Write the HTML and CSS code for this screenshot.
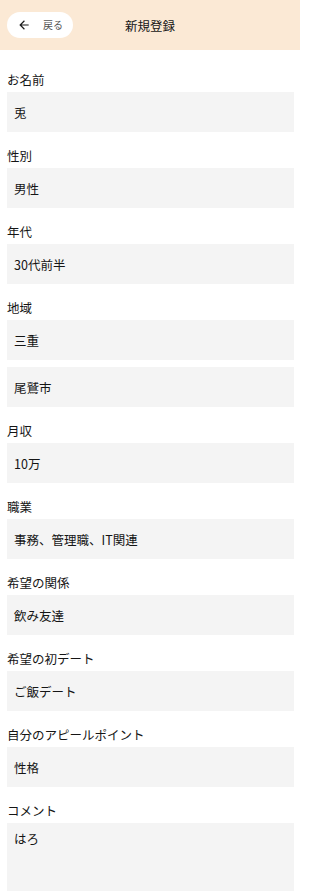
FILE: index.html
```html
<!DOCTYPE html>
<html lang="ja">
<head>
<meta charset="utf-8">
<title>新規登録</title>
<link rel="stylesheet" href="styles.css">
</head>
<body>
<header class="topbar">
  <div class="topbar-left">
    <button class="back-btn" type="button">
      <svg class="back-icon" viewBox="0 0 24 24" width="14" height="14" aria-hidden="true"><path d="M20 11H7.83l5.59-5.59L12 4l-8 8 8 8 1.41-1.41L7.83 13H20v-2z" fill="#1a1a1a"/></svg>
      <span class="back-text">戻る</span>
    </button>
  </div>
  <h1 class="title">新規登録</h1>
  <div class="topbar-right"></div>
</header>
<main class="form">
  <section class="field">
    <div class="label">お名前</div>
    <div class="box">兎</div>
  </section>
  <section class="field">
    <div class="label">性別</div>
    <div class="box">男性</div>
  </section>
  <section class="field">
    <div class="label">年代</div>
    <div class="box">30代前半</div>
  </section>
  <section class="field">
    <div class="label">地域</div>
    <div class="box">三重</div>
    <div class="box">尾鷲市</div>
  </section>
  <section class="field">
    <div class="label">月収</div>
    <div class="box">10万</div>
  </section>
  <section class="field">
    <div class="label">職業</div>
    <div class="box">事務、管理職、IT関連</div>
  </section>
  <section class="field">
    <div class="label">希望の関係</div>
    <div class="box">飲み友達</div>
  </section>
  <section class="field">
    <div class="label">希望の初デート</div>
    <div class="box">ご飯デート</div>
  </section>
  <section class="field">
    <div class="label">自分のアピールポイント</div>
    <div class="box">性格</div>
  </section>
  <section class="field">
    <div class="label">コメント</div>
    <div class="box box-multi">はろ</div>
  </section>
</main>
</body>
</html>
```
FILE: styles.css
```css
* { box-sizing: border-box; }
html, body { margin: 0; padding: 0; }
body {
  background: #ffffff;
  color: #151515;
  font-family: "Noto Sans CJK JP", "Noto Sans", sans-serif;
  width: 300px;
  height: 893px;
  overflow: hidden;
}
.topbar {
  height: 50px;
  background: #fbe9d5;
  display: grid;
  grid-template-columns: 1fr auto 1fr;
  align-items: center;
}
.topbar-left { padding-left: 7px; }
.back-btn {
  width: 66px;
  height: 26px;
  border: none;
  border-radius: 13px;
  background: #ffffff;
  display: flex;
  align-items: center;
  padding: 0 0 0 10px;
  font-family: inherit;
  cursor: pointer;
}
.back-icon { display: block; }
.back-text {
  margin-left: 12px;
  font-size: 10px;
  color: #555555;
  line-height: 1;
}
.title {
  margin: 0;
  font-size: 12.5px;
  font-weight: 400;
  color: #151515;
}
.form {
  padding: 20px 6px 0 7px;
  display: flex;
  flex-direction: column;
  gap: 14px;
}
.field {
  display: flex;
  flex-direction: column;
  gap: 7px;
}
.label {
  font-size: 12.5px;
  line-height: 19px;
  margin-bottom: -4px;
}
.box {
  height: 40px;
  background: #f4f4f4;
  padding: 0 7px;
  font-size: 12.5px;
  display: flex;
  align-items: center;
}
.box-multi {
  height: 68px;
  align-items: flex-start;
  padding-top: 8px;
  line-height: 16px;
}
```
